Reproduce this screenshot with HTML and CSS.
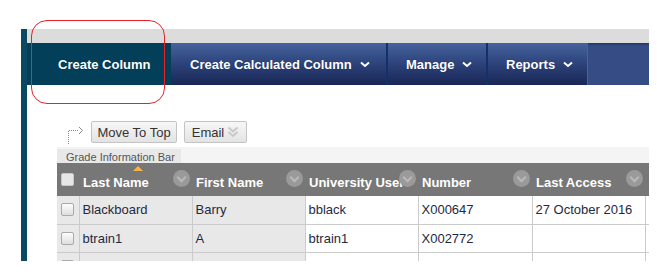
FILE: index.html
```html
<!DOCTYPE html>
<html>
    <head>
        <link rel="stylesheet" href="styles.css">
    </head>
    <body>
        <div class="frame">
            <div class="topstrip"></div>
            <div class="actionbar">
                <a class="tab tab-main">Create Column</a>
                <a class="tab tab-calc">Create Calculated Column <svg class="chev" width="10" height="7" viewBox="0 0 10 7"><path d="M1 1.5 L5 5 L9 1.5" fill="none" stroke="#fff" stroke-width="2"/></svg></a>
                <a class="tab tab-manage">Manage <svg class="chev" width="10" height="7" viewBox="0 0 10 7"><path d="M1 1.5 L5 5 L9 1.5" fill="none" stroke="#fff" stroke-width="2"/></svg></a>
                <a class="tab tab-reports">Reports <svg class="chev" width="10" height="7" viewBox="0 0 10 7"><path d="M1 1.5 L5 5 L9 1.5" fill="none" stroke="#fff" stroke-width="2"/></svg></a>
                <div class="fill"></div>
            </div>
            <div class="content">
                <div class="toolbar">
                    <svg class="move-arrow" width="18" height="20" viewBox="0 0 18 20">
                        <path d="M1.5 20 V6.5 H11" fill="none" stroke="#888" stroke-width="1" stroke-dasharray="1 1"/>
                        <path d="M12 3 L15.5 6.5 L12 10" fill="none" stroke="#888" stroke-width="1"/>
                    </svg>
                    <button class="btn btn-top">Move To Top</button>
                    <button class="btn btn-email">Email <svg width="12" height="12" viewBox="0 0 12 12"><path d="M1.5 1.5 L6 5.5 L10.5 1.5 M1.5 6 L6 10 L10.5 6" fill="none" stroke="#c8c8c8" stroke-width="2"/></svg></button>
                </div>
                <div class="infobar"><span class="infotab">Grade Information Bar</span></div>
                <table class="grid">
                    <colgroup>
                        <col style="width: 22px">
                        <col style="width: 113px">
                        <col style="width: 113px">
                        <col style="width: 113px">
                        <col style="width: 114px">
                        <col style="width: 113px">
                        <col style="width: 113px">
                    </colgroup>
                    <thead>
                        <tr>
                            <th class="cb-cell"><span class="cb cb-head"></span></th>
                            <th><span class="sorted"></span>Last Name<span class="sort"></span></th>
                            <th>First Name<span class="sort"></span></th>
                            <th>University User<span class="sort"></span></th>
                            <th>Number<span class="sort"></span></th>
                            <th>Last Access<span class="sort"></span></th>
                            <th>Availability<span class="sort"></span></th>
                        </tr>
                    </thead>
                    <tbody>
                        <tr>
                            <td class="cb-cell shade"><span class="cb"></span></td>
                            <td class="shade">Blackboard</td>
                            <td class="shade">Barry</td>
                            <td>bblack</td>
                            <td>X000647</td>
                            <td>27 October 2016</td>
                            <td></td>
                        </tr>
                        <tr>
                            <td class="cb-cell shade"><span class="cb"></span></td>
                            <td class="shade">btrain1</td>
                            <td class="shade">A</td>
                            <td>btrain1</td>
                            <td>X002772</td>
                            <td></td>
                            <td></td>
                        </tr>
                        <tr>
                            <td class="cb-cell shade"><span class="cb"></span></td>
                            <td class="shade"></td>
                            <td class="shade"></td>
                            <td></td>
                            <td></td>
                            <td></td>
                            <td></td>
                        </tr>
                    </tbody>
                </table>
            </div>
        </div>
        <div class="callout"></div>
    </body>
</html>
```

FILE: styles.css
```css
*{
    box-sizing: border-box;
    margin: 0px;
}
body{
    background: #fff;
    font-family: "Liberation Sans", Arial, sans-serif;
}
.frame{
    margin: 29px 0 0 21px;
    width: 628px;
    height: 232px;
    border-left: 6px solid #0b4861;
    overflow: hidden;
}
.topstrip{
    height: 14px;
    background-color: #dcdcdc;
}
.actionbar{
    display: flex;
    height: 42px;
}
.tab{
    display: flex;
    align-items: center;
    height: 42px;
    color: #fff;
    font-size: 13px;
    font-weight: bold;
    white-space: nowrap;
    text-shadow: 0 0 1px rgba(0, 0, 0, 0.4);
    background: linear-gradient(#46639d, #2c427a 50%, #1a2756);
    border-right: 2px solid #123168;
    padding-left: 18px;
}
.tab .chev{
    margin-left: 8px;
    margin-top: 1px;
}
.tab-main{
    width: 144px;
    background: #033f58;
    border-right: none;
    padding-left: 31px;
}
.tab-calc{
    width: 217px;
    padding-left: 19px;
}
.tab-manage{
    width: 100px;
}
.tab-reports{
    width: 100px;
    border-right: 1px solid #4d6396;
}
.fill{
    flex: 1;
    background: linear-gradient(#22366a, #364c84 3px, #364c84);
}
.content{
    padding-left: 30px;
}
.toolbar{
    display: flex;
    align-items: center;
    margin-top: 36px;
    height: 22px;
}
.move-arrow{
    margin-left: 10px;
    align-self: flex-start;
    margin-top: 3px;
}
.btn{
    height: 22px;
    padding: 0;
    margin-left: 6px;
    font-family: "Liberation Sans", Arial, sans-serif;
    font-size: 13px;
    color: #333;
    background: linear-gradient(#f7f7f7, #e3e3e3);
    border: 1px solid #c4c4c4;
    border-radius: 2px;
}
.btn-top{
    width: 86px;
}
.btn-email{
    width: 63px;
    margin-left: 7px;
    display: flex;
    align-items: center;
    justify-content: center;
    gap: 3px;
}
.infobar{
    margin-top: 4px;
    height: 16px;
    background-color: #f4f4f4;
}
.infotab{
    display: inline-block;
    height: 16px;
    width: 124px;
    padding-left: 9px;
    background-color: #e8e8e8;
    font-size: 11px;
    line-height: 16px;
    color: #555;
}
.grid{
    border-collapse: collapse;
    table-layout: fixed;
    width: 701px;
}
.grid th{
    position: relative;
    height: 33px;
    padding: 5px 0 0 4px;
    background-color: #777;
    color: #fff;
    font-size: 13px;
    font-weight: bold;
    text-align: left;
    white-space: nowrap;
    overflow: hidden;
}
.grid td{
    height: 28px;
    padding: 0 0 0 3px;
    border: 1px solid #cbcbcb;
    border-top: none;
    font-size: 13px;
    color: #1e2a44;
    white-space: nowrap;
    overflow: hidden;
}
.grid td:first-child{
    border-left: none;
}
.grid .shade{
    background-color: #e8e8e8;
}
.grid .cb-cell{
    padding: 0 0 0 4px;
}
.cb{
    display: block;
    width: 13px;
    height: 13px;
    border: 1px solid #a9a9a9;
    border-radius: 2px;
    background: linear-gradient(#fdfdfd, #dedede);
}
.cb-head{
    border-color: #c8c8c8;
    background: #e6e6e6;
    margin-top: -1px;
}
.sort{
    position: absolute;
    right: 2px;
    top: 7px;
    width: 17px;
    height: 17px;
    border-radius: 50%;
    background-color: #9a9a9a;
}
.sort::after{
    content: "";
    position: absolute;
    left: 5px;
    top: 4px;
    width: 5px;
    height: 5px;
    border-right: 2px solid #b9b9b9;
    border-bottom: 2px solid #b9b9b9;
    transform: rotate(45deg);
}
.sorted{
    position: absolute;
    left: 54px;
    top: 3px;
    border-left: 5px solid transparent;
    border-right: 5px solid transparent;
    border-bottom: 5px solid #f7b548;
}
.callout{
    position: absolute;
    left: 31px;
    top: 20px;
    width: 134px;
    height: 84px;
    border: 1px solid #e5232a;
    border-radius: 16px;
}
```
